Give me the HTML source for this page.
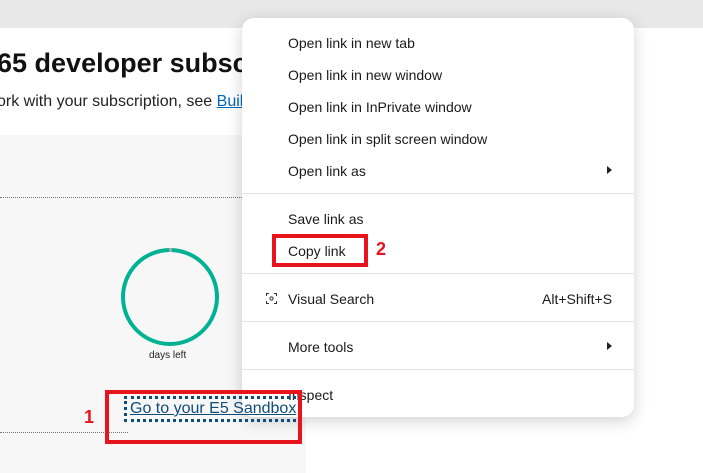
<!DOCTYPE html>
<html><head><style>
body{margin:0;width:703px;height:473px;overflow:hidden;position:relative;background:#fff;font-family:"Liberation Sans",sans-serif;}
.top{position:absolute;left:0;top:0;width:703px;height:28px;background:#e8e8e8;}
h1{position:absolute;left:-18px;top:48px;margin:0;font-size:27px;font-weight:bold;color:#111;white-space:nowrap;}
.sub{position:absolute;left:-3px;top:93px;font-size:16px;color:#222;white-space:nowrap}
.sub a{color:#0067b8;text-decoration:underline}
.panel{position:absolute;left:0;top:135px;width:306px;height:338px;background:#f7f7f7;}
.dot{position:absolute;left:0;height:0;border-top:1px dotted #777;}
.ring{position:absolute;left:121px;top:248px;width:90px;height:90px;border:4px solid #00b294;border-radius:50%;}
.days{position:absolute;left:149px;top:350px;font-size:10px;color:#222}
.link{position:absolute;left:128px;top:400px;font-size:16px;color:#0e4c7a;text-decoration:underline;white-space:nowrap;outline:3px dotted #0e4c7a;outline-offset:1px;padding:0 2px;z-index:3}
.menu{position:absolute;left:242px;top:18px;width:392px;height:399px;background:#fff;border-radius:12px;box-shadow:0 4px 16px rgba(0,0,0,.18);z-index:2}
.it{position:absolute;left:46px;font-size:14px;color:#1a1a1a;white-space:nowrap}
.sep{position:absolute;left:0;width:392px;height:1px;background:#e3e3e3}
.arr{position:absolute;left:365px;width:0;height:0;border-left:5px solid #222;border-top:4px solid transparent;border-bottom:4px solid transparent}
.red{position:absolute;border:4px solid #e8141c;box-sizing:border-box;z-index:4}
.num{position:absolute;color:#e8141c;font-weight:bold;font-size:18px;z-index:4}
</style></head><body>
<div class="top"></div>
<h1>365 developer subscription</h1>
<div class="sub">ork with your subscription, see <a>Build</a></div>
<div class="panel"></div>
<div class="dot" style="top:197px;width:306px"></div>
<div class="dot" style="top:432px;width:128px"></div>
<div class="ring"></div>
<div style="position:absolute;left:169px;top:248px;width:3px;height:4px;background:#aaa"></div>
<div class="days">days left</div>
<div class="link">Go to your E5 Sandbox</div>
<div class="menu">
<div class="it" style="top:17px">Open link in new tab</div>
<div class="it" style="top:49px">Open link in new window</div>
<div class="it" style="top:81px">Open link in InPrivate window</div>
<div class="it" style="top:113px">Open link in split screen window</div>
<div class="it" style="top:145px">Open link as</div>
<div class="arr" style="top:148px"></div>
<div class="sep" style="top:175px"></div>
<div class="it" style="top:193px">Save link as</div>
<div class="it" style="top:225px">Copy link</div>
<div class="sep" style="top:255px"></div>
<svg style="position:absolute;left:24px;top:275px" width="11" height="11" viewBox="0 0 11 11" fill="none" stroke="#333" stroke-width="1"><path d="M0.5 3V0.5H3M8 0.5h2.5V3M10.5 8v2.5H8M3 10.5H0.5V8"/><circle cx="5.5" cy="5.5" r="1.6"/></svg>
<div class="it" style="top:273px">Visual Search</div>
<div class="it" style="top:273px;left:300px">Alt+Shift+S</div>
<div class="sep" style="top:303px"></div>
<div class="it" style="top:321px">More tools</div>
<div class="arr" style="top:324px"></div>
<div class="sep" style="top:351px"></div>
<div class="it" style="top:369px">Inspect</div>
</div>
<div class="red" style="left:272px;top:234px;width:96px;height:33px"></div>
<div class="num" style="left:376px;top:239px">2</div>
<div class="red" style="left:105px;top:390px;width:197px;height:54px"></div>
<div class="num" style="left:84px;top:407px">1</div>
</body></html>
